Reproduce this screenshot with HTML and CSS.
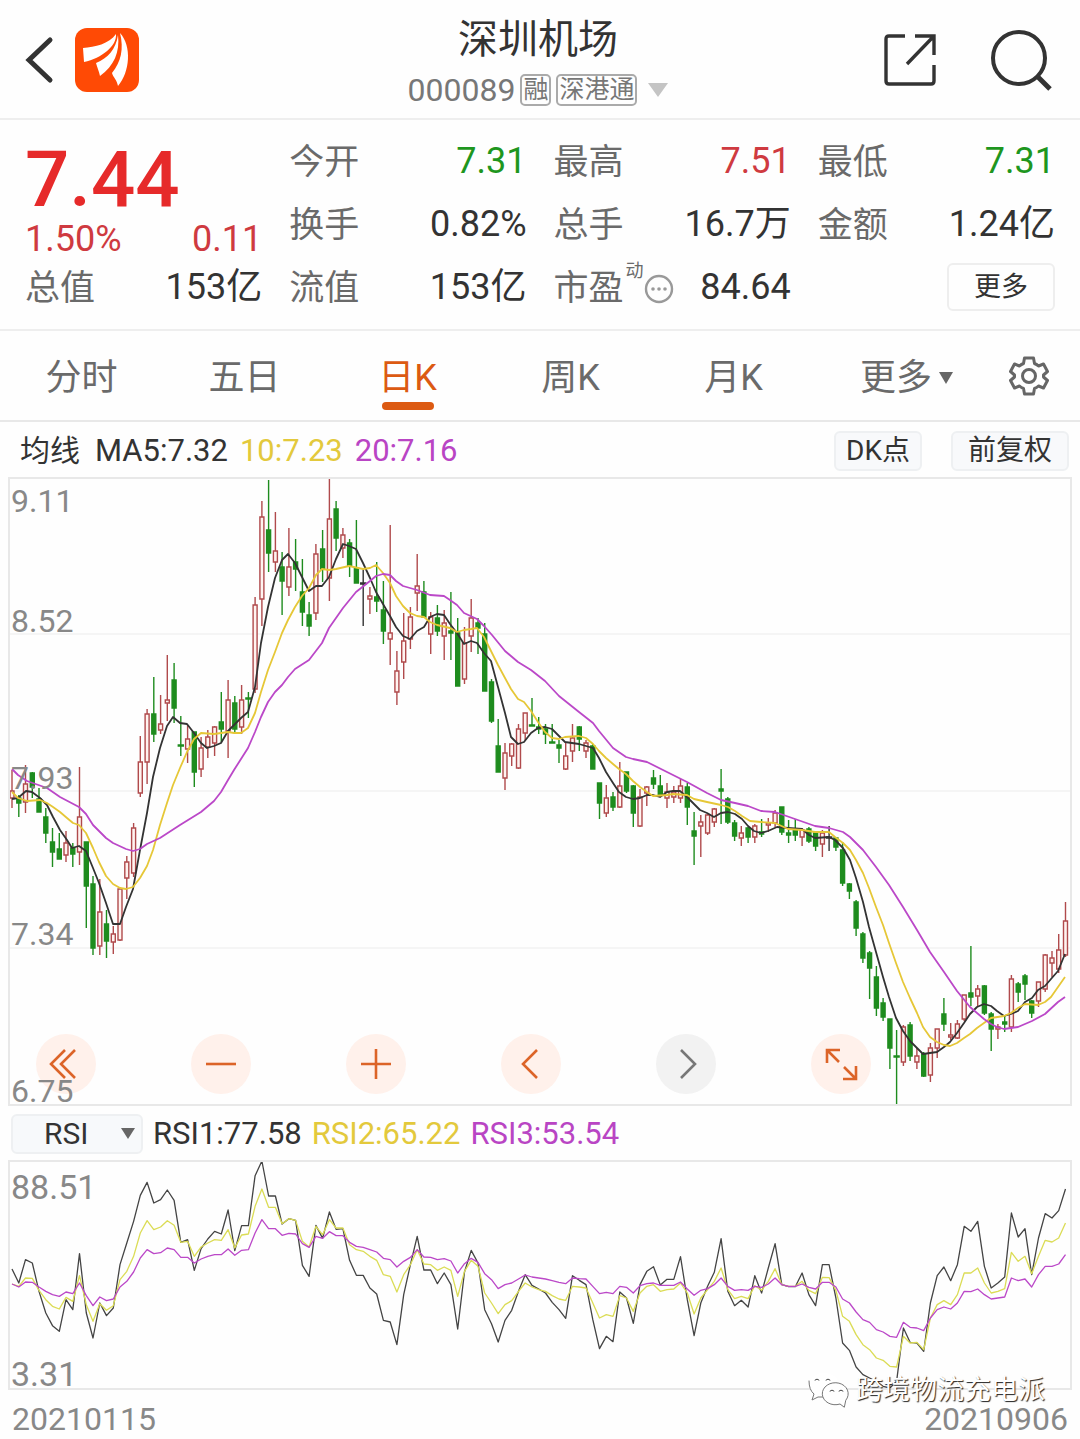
FILE: index.html
```html
<!DOCTYPE html>
<html lang="zh-CN">
<head>
    <meta charset="UTF-8">
    <meta name="viewport" content="width=device-width, initial-scale=1.0">
    <title>深圳机场 000089</title>
    <link rel="stylesheet" href="styles.css">
</head>
<body>
    <header class="header">
        <div class="header-left">
            <button class="icon-btn" aria-label="返回">
                <svg width="30" height="50" viewBox="0 0 30 50"><path d="M26 5 L5 25 L26 45" fill="none" stroke="#333" stroke-width="5" stroke-linecap="round"/></svg>
            </button>
            <a class="logo" href="#" aria-label="首页">
                <svg width="64" height="64" viewBox="0 0 64 64">
                    <rect width="64" height="64" rx="12" fill="#ff4a05"/>
                    <path d="M8 20 C20 19 34 16 41 6 C42 18 27 30 9 34 Z" fill="#fff"/>
                    <path d="M43 7 C45 24 39 38 25 48 C24 43 22 39 21 35 C33 30 41 21 43 7 Z" fill="#fff"/>
                    <path d="M45 5 C57 18 55 44 43 58 C42 52 38 49 37 45 C46 34 49 21 45 5 Z" fill="#fff"/>
                </svg>
            </a>
        </div>
        <div class="header-title">
            <h1>深圳机场</h1>
            <p class="code">
                <span>000089</span>
                <span class="tag">融</span>
                <span class="tag">深港通</span>
                <svg width="20" height="14" viewBox="0 0 20 14"><path d="M0 0 H20 L10 14 Z" fill="#c4c4c4"/></svg>
            </p>
        </div>
        <div class="header-right">
            <button class="icon-btn" aria-label="分享">
                <svg width="52" height="52" viewBox="0 0 52 52" fill="none" stroke="#333" stroke-width="3.4">
                    <path d="M21 2 H5 Q2 2 2 5 V47 Q2 50 5 50 H47 Q50 50 50 47 V31"/>
                    <path d="M31 2 H50 V21 M50 2 L23 30"/>
                </svg>
            </button>
            <button class="icon-btn" aria-label="搜索">
                <svg width="62" height="62" viewBox="0 0 62 62" fill="none" stroke="#333" stroke-width="4">
                    <circle cx="29" cy="29" r="26"/>
                    <path d="M47 47 L60 60" stroke-width="5"/>
                </svg>
            </button>
        </div>
    </header>

    <section class="quote">
        <div class="quote-price">
            <strong class="price">7.44</strong>
            <div class="change"><span>1.50%</span><span>0.11</span></div>
        </div>
        <div class="item"><span class="label">今开</span><span class="down">7.31</span></div>
        <div class="item"><span class="label">最高</span><span class="up">7.51</span></div>
        <div class="item"><span class="label">最低</span><span class="down">7.31</span></div>
        <div class="item"><span class="label">换手</span><span>0.82%</span></div>
        <div class="item"><span class="label">总手</span><span>16.7万</span></div>
        <div class="item"><span class="label">金额</span><span>1.24亿</span></div>
        <div class="item"><span class="label">总值</span><span>153亿</span></div>
        <div class="item"><span class="label">流值</span><span>153亿</span></div>
        <div class="item">
            <span class="label pe">市盈<small>动</small>
                <svg width="30" height="30" viewBox="0 0 30 30"><circle cx="15" cy="15" r="13" fill="none" stroke="#999" stroke-width="2.4"/><g fill="#999"><circle cx="9" cy="15" r="1.8"/><circle cx="15" cy="15" r="1.8"/><circle cx="21" cy="15" r="1.8"/></g></svg>
            </span>
            <span>84.64</span>
        </div>
        <div class="item item-more"><button class="more-btn">更多</button></div>
    </section>

    <nav class="tabs">
        <button class="tab">分时</button>
        <button class="tab">五日</button>
        <button class="tab active">日K</button>
        <button class="tab">周K</button>
        <button class="tab">月K</button>
        <button class="tab tab-more">更多<svg width="14" height="12" viewBox="0 0 14 12"><path d="M0 0 H14 L7 12 Z" fill="#666"/></svg></button>
        <button class="tab tab-set" aria-label="设置">
            <svg width="40" height="40" viewBox="0 0 40 40" fill="none" stroke="#666" stroke-width="3" stroke-linejoin="round">
                <path d="M15.500 2 H24.500 L25.500 7.500 Q28 8.500 29.500 10 L34.500 8 L38.500 15.500 L34.500 19 V21 L38.500 24.500 L34.500 32 L29.500 30 Q28 31.500 25.500 32.500 L24.500 38 H15.500 L14.500 32.500 Q12 31.500 10.500 30 L5.500 32 L1.500 24.500 L5.500 21 V19 L1.500 15.500 L5.500 8 L10.500 10 Q12 8.500 14.500 7.500 Z"/>
                <circle cx="20" cy="20" r="6.500"/>
            </svg>
        </button>
    </nav>

    <main>
        <div class="bar bar-ma">
            <span class="ma-name">均线</span>
            <span>MA5:7.32</span>
            <span class="yellow">10:7.23</span>
            <span class="purple">20:7.16</span>
            <div class="bar-buttons">
                <button class="small-btn">DK点</button>
                <button class="small-btn">前复权</button>
            </div>
        </div>

        <div class="chart kline">
            <svg id="kline" viewBox="9 478 1062 627" preserveAspectRatio="none"></svg>
            <div class="tools">
                <button class="tool" aria-label="最早"><svg viewBox="0 0 60 60"><path d="M29 16 L15 30 L29 44 M39 16 L25 30 L39 44"/></svg></button>
                <button class="tool" aria-label="缩小"><svg viewBox="0 0 60 60"><path d="M15 30 H45"/></svg></button>
                <button class="tool" aria-label="放大"><svg viewBox="0 0 60 60"><path d="M15 30 H45 M30 15 V45"/></svg></button>
                <button class="tool" aria-label="向左"><svg viewBox="0 0 60 60"><path d="M36 16 L22 30 L36 44"/></svg></button>
                <button class="tool disabled" aria-label="向右"><svg viewBox="0 0 60 60"><path d="M25 16 L39 30 L25 44"/></svg></button>
                <button class="tool" aria-label="全屏"><svg viewBox="0 0 60 60"><path d="M16 29 V16 H29 M16 16 L28 28 M45 32 V45 H32 M45 45 L33 33"/></svg></button>
            </div>
            <div class="axis">
                <span class="axis-top">9.11</span>
                <span>8.52</span>
                <span>7.93</span>
                <span>7.34</span>
                <span>6.75</span>
            </div>
        </div>

        <div class="bar">
            <label class="select-box">
                <select aria-label="指标">
                    <option>RSI</option>
                    <option>MACD</option>
                    <option>KDJ</option>
                </select>
            </label>
            <span>RSI1:77.58</span>
            <span class="yellow">RSI2:65.22</span>
            <span class="purple">RSI3:53.54</span>
        </div>

        <div class="chart rsi">
            <svg id="rsi" viewBox="9 424 1062 684" preserveAspectRatio="none"></svg>
            <div class="axis-rsi">
                <span>88.51</span>
                <span>3.31</span>
            </div>
            <div class="watermark">
                <svg width="46" height="38" viewBox="0 0 46 38" stroke="#777" stroke-width="1" stroke-linecap="round" fill="#fff">
                    <path d="M7 29 L8 23 A15 12 0 1 1 18 26 L12 26 Z" stroke="none"/>
                    <path d="M3 10 Q3 19 8 23 L6 29 L12 26 H18" fill="none"/>
                    <path d="M38 36 L34 33 A13 11 0 1 1 40 29 Z"/>
                    <path d="M9 9 Q11 7 13 9 M20 9 Q22 7 24 9 M24 20 Q26 18 28 20 M33 20 Q35 18 37 20" fill="none" stroke="#444"/>
                </svg>
                <span>跨境物流充电派</span>
            </div>
        </div>

        <div class="dates"><span>20210115</span><span>20210906</span></div>
    </main>

    <script src="chart.js"></script>
</body>
</html>
```

FILE: styles.css
```css
* {
    box-sizing: border-box;
}
body {
    margin: 0;
    background-color: #fefefe;
    color: #333;
    font-family: Roboto, "Noto Sans CJK SC", sans-serif;
    font-size: 36px;
    line-height: 40px;
}
button, select {
    margin: 0;
    padding: 0;
    border: 0;
    background: none;
    color: inherit;
    font: inherit;
    cursor: pointer;
}
svg {
    display: block;
}
h1, p {
    margin: 0;
    font-weight: normal;
}

/* header */
.header {
    display: grid;
    grid-template-columns: 1fr auto 1fr;
    height: 120px;
    padding: 2px 28px 0 24px;
    border-bottom: 2px solid #eee;
}
.header-left, .header-right {
    display: flex;
    align-items: center;
}
.header-left {
    gap: 21px;
}
.header-right {
    justify-content: flex-end;
    gap: 54px;
}
.header-title {
    padding-top: 15px;
    text-align: center;
}
h1 {
    font-size: 40px;
    line-height: 46px;
}
.code {
    display: flex;
    align-items: center;
    gap: 5px;
    height: 54px;
    color: #777;
    font-size: 32px;
}
.tag {
    padding: 0 1px;
    border: 2px solid #aaa;
    border-radius: 5px;
    font-size: 25px;
    line-height: 28px;
}
.code svg {
    margin-left: 6px;
}

/* quote */
.quote {
    display: grid;
    grid-template-columns: repeat(4, 1fr);
    grid-auto-rows: 63px;
    column-gap: 27px;
    height: 211px;
    padding: 9px 25px 0;
    border-bottom: 2px solid #eee;
}
.quote-price {
    grid-row: span 2;
    color: #e62a2a;
}
.price {
    display: block;
    padding-top: 12px;
    font-size: 78px;
    font-weight: 500;
    line-height: 78px;
}
.change {
    display: flex;
    justify-content: space-between;
    color: #cf3a40;
}
.item {
    display: flex;
    align-items: center;
    justify-content: space-between;
    white-space: nowrap;
}
.label {
    padding-top: 4px;
    color: #6a6a6a;
    font-size: 35px;
}
.pe {
    display: flex;
    align-items: center;
}
.pe small {
    align-self: flex-start;
    margin-top: -18px;
    padding-left: 2px;
    font-size: 18px;
}
.item-more {
    justify-content: flex-end;
}
.more-btn {
    width: 108px;
    height: 48px;
    border: 2px solid #eee;
    border-radius: 6px;
    font-size: 27px;
}
.up {
    color: #cf3a40;
}
.down {
    color: #1e961e;
}

/* tabs */
.tabs {
    display: grid;
    grid-template-columns: repeat(6, 163fr) 102fr;
    height: 91px;
    border-bottom: 2px solid #e8e8e8;
    color: #6a6a6a;
}
.tab {
    position: relative;
    display: flex;
    align-items: center;
    justify-content: center;
    padding-top: 4px;
}
.tab-set {
    padding-top: 0;
}
.tab.active {
    color: #dc5a12;
}
.tab.active::after {
    content: "";
    position: absolute;
    bottom: 10px;
    width: 52px;
    height: 8px;
    border-radius: 4px;
    background-color: #dc5a12;
}
.tab-more {
    gap: 7px;
    padding-left: 20px;
}

/* indicator bars */
.bar {
    display: flex;
    align-items: center;
    gap: 10px;
    height: 56px;
    padding: 2px 11px 0;
    font-size: 31px;
    white-space: nowrap;
}
.bar-ma {
    gap: 12px;
}
.ma-name {
    padding: 0 3px 0 9px;
    font-size: 30px;
}
.yellow {
    color: #e3c93c;
}
.purple {
    color: #b945c4;
}
.bar-buttons {
    display: flex;
    gap: 29px;
    margin-left: auto;
}
.small-btn {
    height: 40px;
    padding: 0 10px;
    border: 2px solid #eef0f2;
    border-radius: 6px;
    background-color: #f8f9fb;
    font-size: 28px;
    line-height: 34px;
}
.small-btn + .small-btn {
    padding: 0 15px;
}
.select-box {
    position: relative;
    width: 132px;
}
.select-box select {
    display: block;
    width: 100%;
    height: 40px;
    padding-left: 31px;
    border: 2px solid #eef0f2;
    border-radius: 6px;
    background-color: #f7f9fb;
    font-size: 30px;
    line-height: 34px;
    appearance: none;
}
.select-box::after {
    content: "";
    position: absolute;
    top: 14px;
    right: 8px;
    border: 7px solid transparent;
    border-top: 11px solid #666;
    border-bottom: 0;
    pointer-events: none;
}

/* charts */
.chart {
    position: relative;
    margin: 0 9px;
    outline: 2px solid #e8e8e8;
    outline-offset: -1px;
}
.chart > svg {
    width: 100%;
    height: 100%;
    overflow: visible;
}
.kline {
    height: 627px;
}
.rsi {
    height: 228px;
}
.axis {
    position: absolute;
    inset: 0;
    display: grid;
    grid-template-rows: repeat(4, 1fr);
    align-items: end;
    padding-left: 2px;
    color: #888;
    font-size: 32px;
    line-height: 28px;
    pointer-events: none;
}
.axis span {
    grid-column: 1;
}
.axis .axis-top {
    grid-row: 1;
    align-self: start;
    padding-top: 9px;
}
.axis span:nth-child(2) {
    grid-row: 1;
}
.axis-rsi {
    position: absolute;
    inset: 0;
    display: flex;
    flex-direction: column;
    justify-content: space-between;
    padding: 11px 0 0 2px;
    color: #888;
    font-size: 34px;
    line-height: 30px;
}
.tools {
    position: absolute;
    left: 27px;
    bottom: 11px;
    display: flex;
    gap: 95px;
}
.tool {
    width: 60px;
    height: 60px;
    border-radius: 50%;
    background-color: #fff1eb;
}
.tool path {
    fill: none;
    stroke: #dc6428;
    stroke-width: 2.6;
}
.tool.disabled {
    background-color: #f2f2f2;
}
.tool.disabled path {
    stroke: #777;
}
.candle {
    stroke-width: 1.4;
}
.candle.r {
    fill: #fff3f0;
    stroke: #b04a4c;
}
.candle.g {
    fill: #1e8c1e;
    stroke: #1e8c1e;
}
.candle.b {
    fill: #333;
    stroke: #333;
}
.grid {
    stroke: #f5f5f5;
    stroke-width: 2;
}
.line {
    fill: none;
    stroke-width: 1.8;
    stroke-linejoin: round;
    vector-effect: non-scaling-stroke;
}
.rsi .line {
    stroke-width: 1.3;
}
.line.black {
    stroke: #333;
}
.line.gold {
    stroke: #e6c737;
}
.line.violet {
    stroke: #bb48c8;
}
.rsi .line.gold {
    stroke: #dbdc55;
}
.rsi .line.black {
    stroke: #444;
}
.watermark {
    position: absolute;
    right: 26px;
    bottom: -20px;
    display: flex;
    align-items: center;
    gap: 4px;
    color: #fff;
    font-size: 27px;
    line-height: 36px;
    text-shadow: 1px 1px 1px #222;
}
.dates {
    display: flex;
    justify-content: space-between;
    padding: 14px 12px 0;
    color: #888;
    font-size: 32px;
    line-height: 32px;
}
```

FILE: chart.js
```js
// color, high, body top, body bottom, low
const candles = `r770,791,798,808 g795,798,803,817 r765,784,802,813 g772,773,787,798 g788,799,812,812 g808,817,833,843 g828,842,852,867 g833,849,859,859 r831,843,855,862 g843,848,854,867
r767,817,852,865 g842,842,886,928 g876,884,948,955 r879,912,946,955 g910,924,941,958 r926,934,942,954 r887,889,940,941 r856,862,878,899 r823,828,873,877 r736,762,793,797
r709,714,762,784 g677,714,734,742 r695,724,730,734 r655,700,703,721 g663,680,708,723 g716,745,746,756 r725,739,749,763 g732,732,772,787 r737,748,769,777 r730,737,747,758
r726,727,743,756 g692,722,729,742 r680,700,731,758 g696,703,729,732 r685,700,727,734 g692,698,699,718 r597,605,689,693 r501,517,599,626 g480,530,553,572 r512,551,562,572
g552,567,581,615 r528,567,587,596 g539,562,569,591 g559,592,612,626 g602,615,626,636 r544,554,613,620 g530,549,569,582 r478,519,578,601 g501,509,538,551 r528,535,548,558
g539,543,566,577 g520,568,583,583 b568,583,584,626 r587,596,599,614 g562,597,601,612 g581,610,631,644 r525,633,639,665 r651,671,692,705 r613,641,662,679 r607,617,639,649
r554,586,593,611 g581,592,617,617 r612,617,634,654 g605,618,631,636 r610,623,636,660 g592,631,633,660 g618,633,686,686 r627,643,679,684 r599,618,636,652 g618,623,628,654
g623,634,691,691 g679,682,721,723 g719,746,772,772 r743,753,778,790 r743,744,756,766 r724,729,768,769 r713,713,733,740 g698,725,726,726 g717,727,729,734 g724,729,734,744
g724,742,743,743 g740,745,748,763 r742,756,769,770 r724,738,751,762 g726,727,739,751 r740,743,751,758 g744,746,769,769 g783,783,803,819 r785,798,813,817 g792,797,807,811
r762,786,807,808 g772,772,791,793 g785,786,813,827 r789,797,826,827 r786,787,793,806 g770,778,784,789 g775,786,795,797 r783,792,798,808 r786,792,797,803 r779,786,798,803
g783,787,807,825 g812,831,836,865 r815,822,826,857 r813,815,833,835 r808,809,822,827 g769,789,791,824 g797,799,822,824 g820,823,836,841 r826,833,838,846 g827,828,837,843
r824,826,837,843 g819,832,834,837 r818,823,825,832 r810,813,823,827 g807,807,832,835 g820,833,835,843 g819,830,835,841 r828,830,837,846 g827,829,841,843 g832,833,846,851
r830,833,844,857 b826,837,838,851 g837,838,847,851 g842,850,883,886 g883,884,891,899 g900,902,928,936 g932,934,958,963 g951,953,968,999 g966,977,1008,1016 g998,1003,1017,1021
g1019,1019,1048,1069 g1030,1056,1057,1104 r1025,1027,1062,1066 g1022,1025,1056,1061 r1048,1056,1062,1069 g1052,1054,1076,1077 r1043,1048,1075,1082 r1029,1029,1048,1058 g998,1014,1024,1031 r1023,1035,1037,1040
r1020,1024,1038,1039 r995,995,1019,1021 g946,993,997,1006 r985,989,996,1006 g985,986,1013,1015 g1012,1014,1029,1051 r1024,1027,1029,1039 g1015,1022,1024,1032 r975,979,1027,1032 g982,984,992,1002
g974,976,984,1000 g1000,1001,1013,1018 r982,982,1001,1007 r954,955,989,992 r951,958,963,977 r934,950,969,973 r902,921,955,957`.split(/\s+/)

const ma5 = '12,799 18,798 26,791 32,792 40,798 47,805 53,817 60,830 67,840 72,848 79,846 86,851 93,868 99,883 106,903 113,924 120,924 126,907 133,889 140,850 147,813 153,777 160,748 167,726 173,717 180,723 187,724 194,733 201,743 207,748 214,746 221,743 228,731 234,725 241,718 248,712 255,687 261,643 268,607 275,578 282,560 288,554 295,563 302,577 309,591 316,586 322,586 329,577 336,559 343,544 349,546 356,549 363,563 370,578 376,592 383,604 390,616 396,627 403,636 410,639 417,631 424,627 430,617 437,614 444,615 450,624 457,633 464,644 471,641 477,643 484,653 491,661 498,687 505,713 511,737 518,744 524,742 531,733 538,728 545,727 552,729 559,736 565,742 579,744 586,746 593,748 599,758 606,772 613,783 619,792 626,797 633,799 640,798 647,795 653,795 660,797 667,792 673,791 680,791 687,797 694,804 700,810 707,813 714,817 721,813 728,812 735,814 742,819 748,826 754,831 761,833 768,831 777,827 788,828 802,829 809,835 815,838 829,837 835,840 843,848 850,860 856,878 863,902 869,927 876,952 883,977 889,997 896,1018 903,1031 910,1041 917,1048 923,1054 930,1053 937,1052 944,1047 950,1042 957,1033 964,1023 970,1014 977,1007 984,1004 991,1006 997,1011 1004,1016 1011,1014 1018,1011 1025,1002 1032,998 1038,990 1045,986 1051,979 1058,971 1065,954'
const ma10 = '12,792 18,798 27,801 40,800 47,803 53,807 60,812 67,818 73,823 79,825 86,833 93,848 99,862 106,876 113,884 120,888 126,889 133,887 140,878 147,866 153,850 160,825 167,803 173,785 180,768 187,752 194,739 201,733 214,734 228,732 234,733 241,733 248,728 255,713 261,692 268,670 275,652 282,633 288,620 295,607 302,596 309,588 316,575 322,569 329,570 336,569 349,566 363,569 370,568 376,565 383,573 390,583 396,596 403,606 410,613 417,616 424,617 430,622 437,625 450,628 457,632 464,630 471,629 477,628 484,637 491,651 498,665 505,678 511,689 518,699 524,702 531,711 538,722 545,732 552,738 559,739 565,737 579,736 586,738 593,744 599,751 606,758 613,764 619,769 626,774 633,781 640,787 647,792 653,796 667,795 673,794 687,795 694,799 707,802 721,805 728,807 735,811 742,816 750,821 761,822 775,823 788,829 802,830 815,832 829,832 835,837 843,843 850,850 856,860 863,873 869,888 876,907 883,925 889,943 896,963 903,982 910,998 917,1013 923,1027 930,1037 937,1042 944,1045 950,1046 957,1043 964,1038 970,1034 977,1028 984,1023 991,1018 1004,1016 1011,1013 1018,1008 1025,1004 1038,1005 1045,1002 1051,997 1058,987 1065,977'
const ma20 = '12,769 18,775 27,781 47,788 60,797 79,807 86,814 93,825 106,838 113,843 126,849 133,851 140,849 147,844 160,838 180,825 201,812 214,801 221,792 228,780 234,770 248,748 255,732 261,717 268,702 275,692 282,685 288,677 295,669 309,660 322,643 329,628 343,608 356,592 370,581 376,576 383,574 390,575 396,581 403,586 417,590 430,595 444,596 450,600 457,605 464,613 477,619 484,626 492,635 505,651 518,662 531,670 545,681 559,696 579,712 593,723 599,731 613,748 626,757 633,759 647,762 667,772 687,782 707,793 721,800 735,803 748,806 761,811 775,812 795,819 815,826 829,828 843,832 850,837 863,850 876,867 889,885 903,907 917,930 930,952 944,972 957,991 970,1007 984,1019 991,1024 997,1027 1004,1029 1018,1027 1032,1021 1045,1014 1058,1002 1065,997'

const rsi1 = [748,790,720,730,815,880,918,935,840,870,702,880,955,850,888,865,735,670,605,527,488,550,540,511,542,668,660,752,687,658,635,643,571,693,618,618,468,424,529,529,613,597,602,737,770,617,656,577,629,627,722,767,767,805,823,902,907,975,825,735,650,751,751,792,760,795,928,757,692,730,870,912,967,902,872,815,765,797,808,820,848,870,896,768,782,795,900,987,950,966,817,835,911,795,755,741,796,779,779,711,840,948,850,800,758,657,815,858,842,862,768,820,745,672,795,801,801,760,825,858,735,735,835,970,992,1042,1065,1075,1085,1100,1105,1085,925,968,970,995,850,768,742,783,735,620,635,605,740,805,790,772,580,652,627,765,655,582,595,573,508]
const rsi2 = [793,800,775,776,812,840,860,868,833,845,768,855,905,852,872,858,780,755,710,640,603,630,622,603,617,668,665,710,682,670,660,662,630,685,646,643,560,508,563,563,612,597,602,665,682,620,645,600,625,625,675,690,695,710,722,765,770,817,765,735,690,733,735,752,742,752,830,755,722,740,820,850,882,855,843,815,790,802,810,815,828,838,842,800,802,805,850,895,885,890,828,835,875,820,800,795,815,810,808,790,820,883,835,810,785,745,810,837,830,837,798,812,785,747,795,800,800,785,812,822,773,774,812,890,905,945,975,990,1015,1022,1040,1042,950,970,968,990,895,855,843,855,825,760,760,745,790,820,815,807,698,725,710,762,710,662,667,655,610]
const rsi3 = [793,802,787,788,802,815,825,830,817,822,790,828,858,832,843,838,802,785,757,715,690,702,699,685,690,713,713,730,718,710,705,705,688,707,692,690,640,600,627,627,647,641,643,672,683,650,656,636,648,648,668,680,683,690,697,716,720,742,725,713,690,712,713,720,717,724,760,732,716,728,762,780,807,795,790,778,766,772,775,778,783,788,792,775,777,778,800,822,818,822,800,803,820,798,792,790,797,797,797,787,808,827,812,807,795,775,800,812,810,812,800,803,793,775,795,800,800,793,803,808,788,788,802,838,850,877,900,908,930,937,950,953,908,923,925,933,895,870,862,868,850,815,816,808,825,838,835,832,775,783,778,802,765,740,740,733,705]

const STEP = 6.753

function getX(i) {
    return (12 + i * STEP).toFixed(1)
}

function drawKline() {
    let tag = ''
    for (const y of [634, 791, 948]) {
        tag += `<path class="grid" d="M9 ${y} H1071"/>`
    }
    candles.forEach((str, i) => {
        const [high, top, bottom, low] = str.slice(1).split(',').map(Number)
        const x = +getX(i)
        const w = bottom - top < 2 ? 5 : 4
        tag += `<path class="candle ${str[0]}" d="M${x} ${high} V${top} M${x} ${bottom} V${low}`
        tag += ` M${x - w / 2} ${top} h${w} V${bottom} h${-w} Z"/>`
    })
    tag += `<polyline class="line black" points="${ma5}"/>`
    tag += `<polyline class="line gold" points="${ma10}"/>`
    tag += `<polyline class="line violet" points="${ma20}"/>`
    document.getElementById('kline').innerHTML = tag
}

function drawRsi() {
    const line = (arr, color) => {
        const points = arr.map((v, i) => getX(i) + ',' + v).join(' ')
        return `<polyline class="line ${color}" points="${points}"/>`
    }
    document.getElementById('rsi').innerHTML = line(rsi1, 'black') + line(rsi2, 'gold') + line(rsi3, 'violet')
}

drawKline()
drawRsi()
```
